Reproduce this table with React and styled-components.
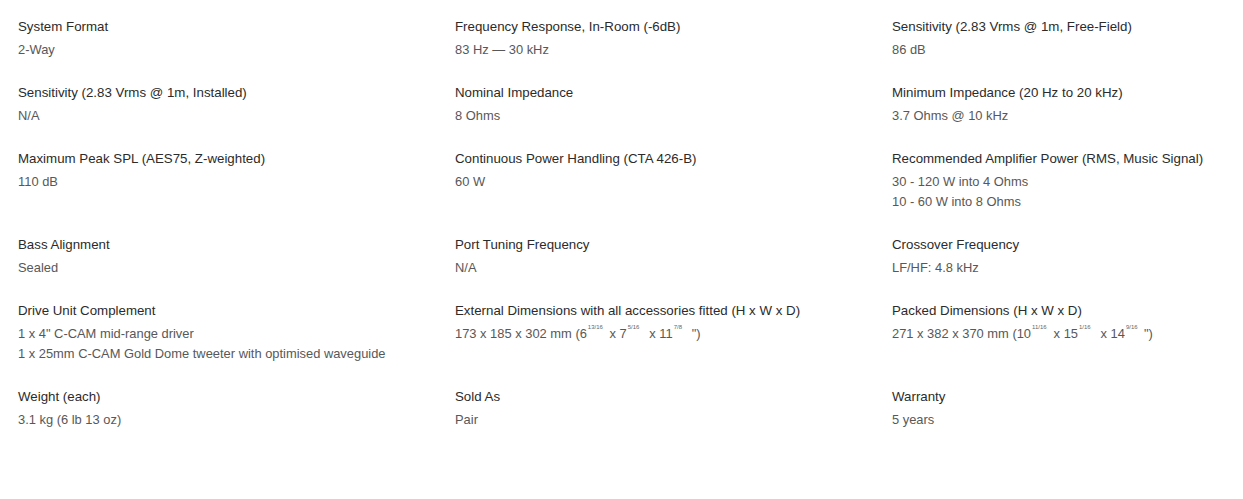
import React from "react";
import styled, { createGlobalStyle } from "styled-components";

const GlobalStyle = createGlobalStyle`
  html, body {
    margin: 0;
    padding: 0;
    background: #fff;
  }
  body {
    font-family: "Liberation Sans", Arial, sans-serif;
  }
`;

const specs = [
  { label: "System Format", value: ["2-Way"] },
  { label: "Frequency Response, In-Room (-6dB)", value: ["83 Hz — 30 kHz"] },
  { label: "Sensitivity (2.83 Vrms @ 1m, Free-Field)", value: ["86 dB"] },
  { label: "Sensitivity (2.83 Vrms @ 1m, Installed)", value: ["N/A"] },
  { label: "Nominal Impedance", value: ["8 Ohms"] },
  { label: "Minimum Impedance (20 Hz to 20 kHz)", value: ["3.7 Ohms @ 10 kHz"] },
  { label: "Maximum Peak SPL (AES75, Z-weighted)", value: ["110 dB"] },
  { label: "Continuous Power Handling (CTA 426-B)", value: ["60 W"] },
  {
    label: "Recommended Amplifier Power (RMS, Music Signal)",
    value: ["30 - 120 W into 4 Ohms", "10 - 60 W into 8 Ohms"],
  },
  { label: "Bass Alignment", value: ["Sealed"] },
  { label: "Port Tuning Frequency", value: ["N/A"] },
  { label: "Crossover Frequency", value: ["LF/HF: 4.8 kHz"] },
  {
    label: "Drive Unit Complement",
    value: [
      '1 x 4" C-CAM mid-range driver',
      "1 x 25mm C-CAM Gold Dome tweeter with optimised waveguide",
    ],
  },
  {
    label: "External Dimensions with all accessories fitted (H x W x D)",
    dims: { mm: "173 x 185 x 302 mm", parts: [["6", "13/16"], ["7", "5/16"], ["11", "7/8"]] },
  },
  {
    label: "Packed Dimensions (H x W x D)",
    dims: { mm: "271 x 382 x 370 mm", parts: [["10", "11/16"], ["15", "1/16"], ["14", "9/16"]] },
  },
  { label: "Weight (each)", value: ["3.1 kg (6 lb 13 oz)"] },
  { label: "Sold As", value: ["Pair"] },
  { label: "Warranty", value: ["5 years"] },
];

function Dimensions({ mm, parts }) {
  return (
    <Line>
      {mm} (
      {parts.map(([whole, frac], i) => (
        <React.Fragment key={i}>
          {i > 0 && " x "}
          {whole}
          <Frac>{frac}</Frac>
        </React.Fragment>
      ))}
      ")
    </Line>
  );
}

export default function App() {
  return (
    <>
      <GlobalStyle />
      <SpecGrid>
        {specs.map((s) => (
          <Spec key={s.label}>
            <Label>{s.label}</Label>
            {s.dims ? (
              <Dimensions {...s.dims} />
            ) : (
              s.value.map((v) => <Line key={v}>{v}</Line>)
            )}
          </Spec>
        ))}
      </SpecGrid>
    </>
  );
}

const SpecGrid = styled.div`
  display: grid;
  grid-template-columns: repeat(3, 437px);
  row-gap: 23px;
  padding: 17px 0 0 18px;
  overflow: hidden;
`;

const Spec = styled.div`
  display: flex;
  flex-direction: column;
`;

const Label = styled.div`
  font-size: 13.3px;
  line-height: 20px;
  color: #2b2b2b;
  margin-bottom: 3px;
  white-space: nowrap;
`;

const Line = styled.div`
  font-size: 12.9px;
  line-height: 20px;
  color: #585858;
  white-space: nowrap;
`;

const Frac = styled.sup`
  display: inline-block;
  min-width: 18px;
  font-size: 6px;
  line-height: 6px;
  vertical-align: 9px;
  margin-left: 1px;
  color: #666;
`;
